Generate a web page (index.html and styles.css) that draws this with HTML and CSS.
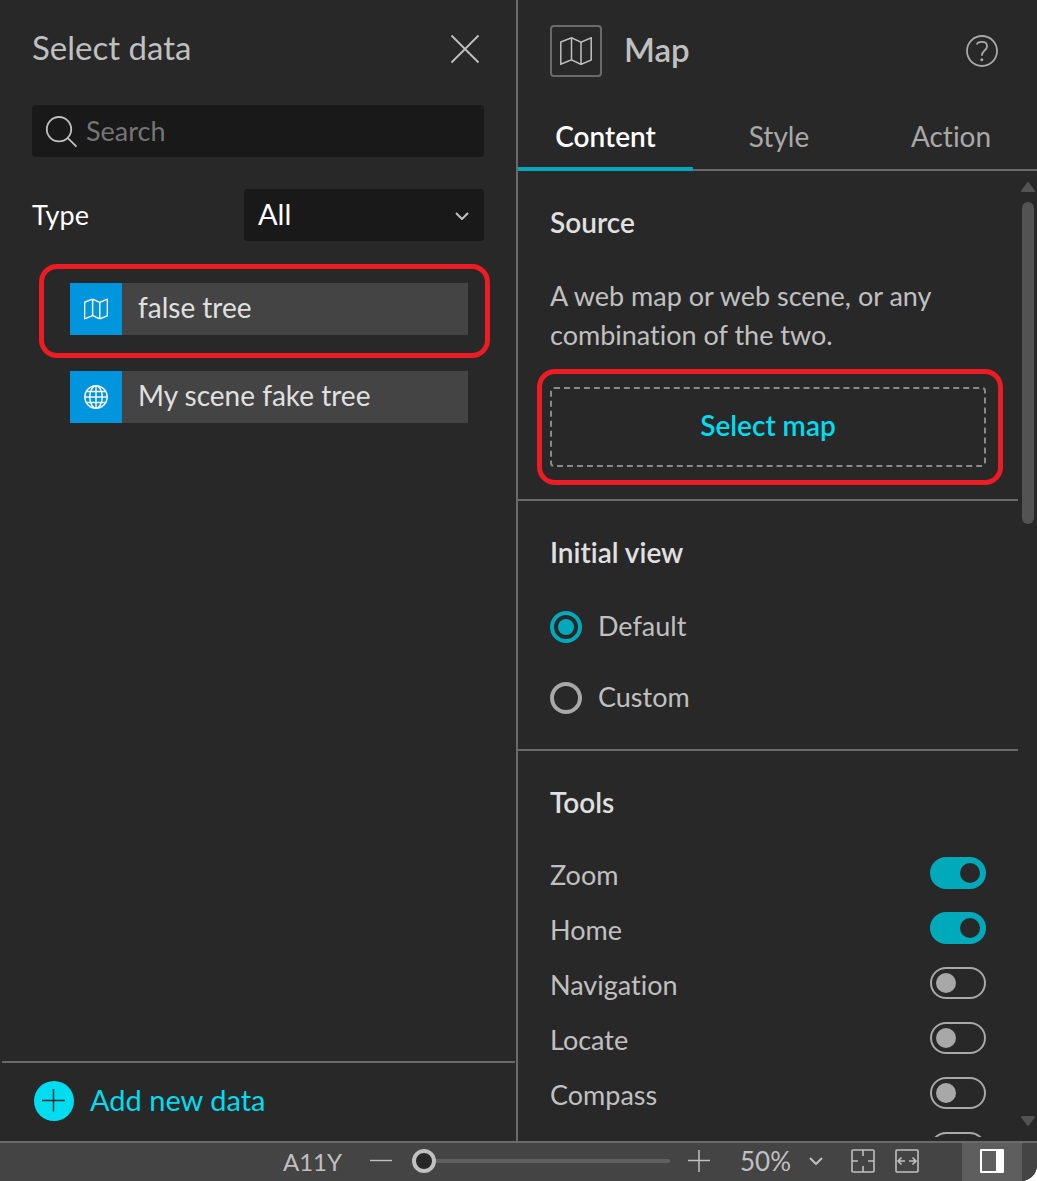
FILE: index.html
```html
<!DOCTYPE html>
<html lang="en">
<head>
<meta charset="utf-8">
<title>Map settings</title>
<meta name="viewport" content="width=device-width, initial-scale=1">
<link rel="stylesheet" href="styles.css">
</head>
<body>
<svg class="sprite" aria-hidden="true">
  <symbol id="icon-map" viewBox="0 0 32 28">
    <path d="M.8 5 11.5.8 21 5.2 31.2.8V23L21 27.4 11.5 22.8.8 27.2ZM11.5.8v22M21 5.2v22.2" fill="none" stroke="currentColor"/>
  </symbol>
</svg>
<div class="app">
  <main class="workspace">
    <section class="data-panel" aria-labelledby="data-title">
      <header class="data-header">
        <h1 class="title title-light" id="data-title">Select data</h1>
        <button class="icon-button" type="button" aria-label="Close">
          <svg width="30" height="30" viewBox="0 0 30 30"><path d="M1.500 1.500 28.500 28.500M28.500 1.500 1.500 28.500" fill="none" stroke="currentColor" stroke-width="1.800"/></svg>
        </button>
      </header>
      <div class="data-body">
        <label class="search">
          <svg width="34" height="34" viewBox="0 0 34 34"><path d="M15 3a12.200 12.200 0 1 0 0 24.400a12.200 12.200 0 1 0 0-24.400ZM23.600 23.800 32.500 32.700" fill="none" stroke="currentColor" stroke-width="1.800"/></svg>
          <input class="search-input" type="search" placeholder="Search" aria-label="Search">
        </label>
        <div class="type-row">
          <label class="type-label" for="type">Type</label>
          <div class="select-box">
            <select class="select" id="type"><option>All</option></select>
            <svg class="select-arrow" width="14" height="8" viewBox="0 0 14 8"><path d="M1 1l6 6 6-6" fill="none" stroke="currentColor" stroke-width="2"/></svg>
          </div>
        </div>
        <ul class="data-list">
          <li class="data-row data-row-marked">
            <button class="data-item" type="button">
              <span class="data-icon"><svg width="24" height="22" viewBox="0 0 32 28" stroke-width="2"><use href="#icon-map"/></svg></span>
              <span class="data-name">false tree</span>
            </button>
          </li>
          <li class="data-row">
            <button class="data-item" type="button">
              <span class="data-icon"><svg width="24" height="24" viewBox="0 0 24 24"><g fill="none" stroke="currentColor" stroke-width="1.500"><circle cx="12" cy="12" r="11.200"/><ellipse cx="12" cy="12" rx="6.200" ry="11.200"/><path d="M12 1v22M1 12h22M3 6.500h18M3 17.500h18"/></g></svg></span>
              <span class="data-name">My scene fake tree</span>
            </button>
          </li>
        </ul>
      </div>
      <footer class="data-footer">
        <button class="add-button" type="button">
          <svg width="40" height="40" viewBox="0 0 40 40"><circle cx="20" cy="20" r="20" fill="#00dcf0"/><path d="M8 19.500h23M19.500 8v22.500" stroke="#282828" stroke-width="1.400"/></svg>
          <span class="add-text">Add new data</span>
        </button>
      </footer>
    </section>

    <section class="map-panel" aria-labelledby="map-title">
      <header class="map-header">
        <span class="map-icon"><svg width="34" height="30" viewBox="-1 -1 34 30" stroke-width="1.500"><use href="#icon-map" width="32" height="28"/></svg></span>
        <h2 class="title" id="map-title">Map</h2>
        <button class="icon-button help-button" type="button" aria-label="Help">
          <svg width="32" height="32" viewBox="0 0 32 32" fill="none" stroke="currentColor"><circle cx="16" cy="16" r="15" stroke-width="1.800"/><path d="M11 9.500C11.300 7.900 13.200 6.900 15.900 6.900c3 0 5.200 1.700 5.200 4.300 0 2.200-1.300 3.300-2.800 4.600-1.600 1.400-2.400 2.200-2.400 5" stroke-width="1.800"/><circle cx="15.800" cy="24.800" r="1.500" fill="currentColor" stroke="none"/></svg>
        </button>
      </header>
      <nav class="tabs" role="tablist">
        <button class="tab tab-active" type="button" role="tab" aria-selected="true">Content</button>
        <button class="tab" type="button" role="tab" aria-selected="false">Style</button>
        <button class="tab" type="button" role="tab" aria-selected="false">Action</button>
      </nav>
      <div class="scroll-area">
        <div class="settings">
          <section class="group">
            <h3 class="group-title">Source</h3>
            <p class="hint">A web map or web scene, or any combination of the two.</p>
            <button class="map-button" type="button">Select map</button>
          </section>
          <section class="group">
            <h3 class="group-title">Initial view</h3>
            <div class="radio-list">
              <label class="radio-row"><input class="radio" type="radio" name="view" checked><span class="radio-name">Default</span></label>
              <label class="radio-row"><input class="radio" type="radio" name="view"><span class="radio-name">Custom</span></label>
            </div>
          </section>
          <section class="group">
            <h3 class="group-title">Tools</h3>
            <div class="tool-list">
              <label class="tool"><span class="tool-name">Zoom</span><input class="switch" type="checkbox" role="switch" checked></label>
              <label class="tool"><span class="tool-name">Home</span><input class="switch" type="checkbox" role="switch" checked></label>
              <label class="tool"><span class="tool-name">Navigation</span><input class="switch" type="checkbox" role="switch"></label>
              <label class="tool"><span class="tool-name">Locate</span><input class="switch" type="checkbox" role="switch"></label>
              <label class="tool"><span class="tool-name">Compass</span><input class="switch" type="checkbox" role="switch"></label>
              <label class="tool"><input class="switch" type="checkbox" role="switch" aria-label="Additional tool"></label>
            </div>
          </section>
        </div>
        <div class="scrollbar" aria-hidden="true">
          <svg width="14" height="10" viewBox="0 0 14 10"><path d="M7 1 13 9H1Z" fill="currentColor" stroke="currentColor" stroke-width="2" stroke-linejoin="round"/></svg>
          <div class="scroll-track"><div class="scroll-thumb"></div></div>
          <svg width="14" height="10" viewBox="0 0 14 10"><path d="M7 9 13 1H1Z" fill="currentColor" stroke="currentColor" stroke-width="2" stroke-linejoin="round"/></svg>
        </div>
      </div>
    </section>
  </main>

  <footer class="status-bar">
    <button class="text-button" type="button">A11Y</button>
    <button class="icon-button zoom-out" type="button" aria-label="Zoom out">
      <svg width="22" height="22" viewBox="0 0 22 22"><path d="M0 10.500h22" stroke="currentColor" stroke-width="1.400"/></svg>
    </button>
    <input class="zoom-slider" type="range" min="0" max="100" value="0" aria-label="Zoom level">
    <button class="icon-button zoom-in" type="button" aria-label="Zoom in">
      <svg width="22" height="22" viewBox="0 0 22 22"><path d="M0 10.500h22M11 0v22" stroke="currentColor" stroke-width="1.500"/></svg>
    </button>
    <button class="zoom-value" type="button">50%
      <svg width="14" height="8" viewBox="0 0 14 8"><path d="M1 1l6 6 6-6" fill="none" stroke="currentColor" stroke-width="2"/></svg>
    </button>
    <button class="icon-button fit-page" type="button" aria-label="Fit page">
      <svg width="24" height="24" viewBox="0 0 24 24" fill="none" stroke="currentColor" stroke-width="1.600"><rect x="1" y="1" width="22" height="22" rx="1"/><path d="M12 1v6M12 17v6M1 12h6M17 12h6"/></svg>
    </button>
    <button class="icon-button fit-width" type="button" aria-label="Fit width">
      <svg width="24" height="24" viewBox="0 0 24 24" fill="none" stroke="currentColor" stroke-width="1.600"><rect x="1" y="1" width="22" height="22" rx="1"/><path d="M3.500 12H10M14 12h6.500M6.500 8.500 3 12l3.500 3.500M17.500 8.500 21 12l-3.500 3.500"/></svg>
    </button>
    <button class="panel-toggle" type="button" aria-label="Toggle panel" aria-pressed="true">
      <svg width="24" height="24" viewBox="0 0 24 24"><path d="M1 1h22v22H1Z" fill="none" stroke="#fff" stroke-width="2" stroke-linejoin="round"/><path d="M16 1h7v22h-7Z" fill="#fff"/></svg>
    </button>
  </footer>
</div>
</body>
</html>
```
FILE: styles.css
```css
:root {
  --bg: #282828;
  --bar: #444;
  --field: #191919;
  --line: #6a6a6a;
  --muted: #a8a8a8;
  --text: #c0c0c0;
  --teal: #00aabb;
  --cyan: #00dcf0;
  --mark: #ed1c24;
}

* {
  box-sizing: border-box;
}

body {
  margin: 0;
  background: #fff;
  color: var(--text);
  font: 27px/39px Lato, "Open Sans", sans-serif;
  font-variant-ligatures: none;
}

h1, h2, h3, p, ul {
  margin: 0;
  padding: 0;
}

button, input, select {
  margin: 0;
  font: inherit;
  font-variant-ligatures: none;
  color: inherit;
}

button {
  padding: 0;
  border: 0;
  background: none;
  cursor: pointer;
}

svg {
  display: block;
  flex: none;
}

.sprite {
  position: absolute;
  width: 0;
  height: 0;
}

.app {
  display: flex;
  flex-direction: column;
  height: 100vh;
  overflow: hidden;
  background: var(--bg);
  border-bottom-right-radius: 16px;
}

.workspace {
  display: grid;
  grid-template-columns: minmax(0, 518fr) minmax(0, 519fr);
  grid-template-rows: minmax(0, 1fr);
  flex: 1;
  min-height: 0;
}

.title {
  padding-bottom: 4px;
  font-size: 33px;
  line-height: 40px;
  font-weight: 600;
}

.title-light {
  font-weight: 400;
}

/* Data panel */
.data-panel {
  display: flex;
  flex-direction: column;
  border-right: 2px solid var(--line);
}

.data-header {
  display: flex;
  align-items: center;
  justify-content: space-between;
  padding: 27px 36px 34px 32px;
}

.data-body {
  flex: 1;
  padding: 0 32px;
}

.search {
  display: flex;
  align-items: center;
  gap: 8px;
  height: 52px;
  padding: 0 12px;
  border-radius: 4px;
  background: var(--field);
}

.search-input {
  flex: 1;
  min-width: 0;
  padding: 0 0 2px;
  border: 0;
  outline: 0;
  background: none;
}

.search-input::placeholder {
  color: #757575;
  opacity: 1;
}

.type-row {
  display: flex;
  align-items: center;
  justify-content: space-between;
  margin-top: 32px;
  color: #fff;
}

.type-label {
  padding-bottom: 2px;
}

.select-box {
  position: relative;
  width: 240px;
}

.select {
  display: block;
  width: 100%;
  height: 52px;
  padding: 0 40px 4px 14px;
  border: 0;
  border-radius: 4px;
  background: var(--field);
  font-size: 29px;
  appearance: none;
}

.select-arrow {
  position: absolute;
  top: 23px;
  right: 15px;
  color: var(--text);
  pointer-events: none;
}

.data-list {
  display: grid;
  gap: 36px;
  margin: 42px 16px 0 38px;
  list-style: none;
}

.data-row {
  position: relative;
}

.data-row-marked::after {
  content: "";
  position: absolute;
  inset: -19px -22px -23px -31px;
  border: 5px solid var(--mark);
  border-radius: 18px;
  pointer-events: none;
}

.data-item {
  display: flex;
  width: 100%;
  height: 52px;
  background: var(--bar);
  color: #e0e0e0;
  font-size: 28px;
  text-align: left;
}

.data-icon {
  display: grid;
  place-items: center;
  width: 52px;
  height: 52px;
  background: #0095dd;
  color: #f4f4f4;
}

.data-name {
  padding: 5px 16px;
}

.data-footer {
  margin: 0 1px 0 2px;
  padding: 18px 32px 20px;
  border-top: 2px solid var(--line);
}

.add-button {
  display: flex;
  align-items: center;
  gap: 16px;
  height: 40px;
  color: var(--cyan);
  font-size: 29px;
}

.add-text {
  padding-bottom: 4px;
}

/* Map panel */
.map-panel {
  display: flex;
  flex-direction: column;
  min-height: 0;
}

.map-header {
  display: flex;
  align-items: center;
  gap: 22px;
  padding: 25px 39px 26px 32px;
}

.map-icon {
  display: grid;
  place-items: center;
  width: 52px;
  height: 52px;
  border: 2px solid var(--line);
  border-radius: 4px;
}

.help-button {
  margin-left: auto;
  color: var(--muted);
}

.tabs {
  display: grid;
  grid-template-columns: 175fr 172fr 172fr;
  height: 68px;
  box-shadow: inset 0 -2px var(--line);
}

.tab {
  padding-top: 2px;
  border-bottom: 4px solid transparent;
  color: var(--muted);
  font-size: 28px;
}

.tab-active {
  border-color: var(--teal);
  color: #fff;
  font-weight: 600;
}

.scroll-area {
  display: flex;
  flex: 1;
  min-height: 0;
  padding-bottom: 4px;
}

.settings {
  flex: 1;
  overflow: hidden;
}

.group {
  padding: 31px 32px 32px;
  border-bottom: 2px solid var(--line);
}

.group-title {
  color: #e0e0e0;
  font-size: 28px;
  line-height: 40px;
  font-weight: 600;
}

.hint {
  margin-top: 34px;
}

.map-button {
  position: relative;
  display: block;
  width: 100%;
  height: 80px;
  margin-top: 33px;
  padding-bottom: 4px;
  border: 2px dashed #8a8a8a;
  border-radius: 4px;
  color: var(--cyan);
  font-size: 28px;
  font-weight: 600;
}

.map-button::after {
  content: "";
  position: absolute;
  inset: -20px -19px -20px -15px;
  border: 5px solid var(--mark);
  border-radius: 18px;
  pointer-events: none;
}

.radio-list {
  display: grid;
  gap: 33px;
  margin-top: 36px;
}

.radio-row {
  display: flex;
  align-items: center;
  gap: 16px;
  height: 38px;
}

.radio {
  width: 32px;
  height: 32px;
  border: 4px solid var(--muted);
  border-radius: 50%;
  appearance: none;
}

.radio:checked {
  padding: 4px;
  border-color: var(--teal);
  background: var(--teal) content-box;
}

.radio-name {
  padding-bottom: 4px;
}

.tool-list {
  display: grid;
  gap: 23px;
  margin-top: 35px;
}

.tool {
  display: flex;
  align-items: center;
  height: 32px;
}

.tool-name {
  padding-top: 3px;
}

.switch {
  display: flex;
  align-items: center;
  width: 56px;
  height: 32px;
  margin-left: auto;
  padding: 0 4px;
  border: 2px solid var(--muted);
  border-radius: 16px;
  appearance: none;
}

.switch::before {
  content: "";
  width: 20px;
  height: 20px;
  border-radius: 50%;
  background: var(--muted);
}

.switch:checked {
  justify-content: flex-end;
  border-color: var(--teal);
  background: var(--teal);
}

.switch:checked::before {
  background: var(--bg);
}

.scrollbar {
  display: flex;
  flex-direction: column;
  align-items: center;
  gap: 10px;
  width: 19px;
  padding: 11px 0 11px 1px;
  color: #535353;
}

.scroll-track {
  display: flex;
  flex-direction: column;
  flex: 1;
  width: 12px;
}

.scroll-track::after {
  content: "";
  flex: 582;
}

.scroll-thumb {
  flex: 322;
  border-radius: 6px;
  background: #535353;
}

/* Status bar */
.status-bar {
  display: flex;
  align-items: center;
  justify-content: flex-end;
  height: 40px;
  padding: 0 15px 2px 0;
  border-top: 2px solid var(--line);
  background: var(--bar);
}

.text-button {
  font-size: 24px;
}

.zoom-out {
  margin-left: 28px;
}

.zoom-slider {
  flex: 0 1 258px;
  min-width: 60px;
  height: 24px;
  margin-left: 20px;
  background: none;
  appearance: none;
}

.zoom-slider::-webkit-slider-runnable-track {
  height: 4px;
  border-radius: 2px;
  background: #606060;
}

.zoom-slider::-webkit-slider-thumb {
  width: 24px;
  height: 24px;
  margin-top: -10px;
  border: 4px solid var(--text);
  border-radius: 50%;
  background: var(--bg);
  appearance: none;
}

.zoom-in {
  margin-left: 18px;
}

.zoom-value {
  display: flex;
  align-items: center;
  gap: 18px;
  margin-left: 30px;
  font-size: 26px;
}

.fit-page {
  margin-left: 28px;
}

.fit-width {
  margin-left: 20px;
}

.panel-toggle {
  display: grid;
  place-items: center;
  width: 60px;
  height: 38px;
  margin: 0 0 -2px 43px;
  padding-bottom: 2px;
  background: #5e5e5e;
}
```
